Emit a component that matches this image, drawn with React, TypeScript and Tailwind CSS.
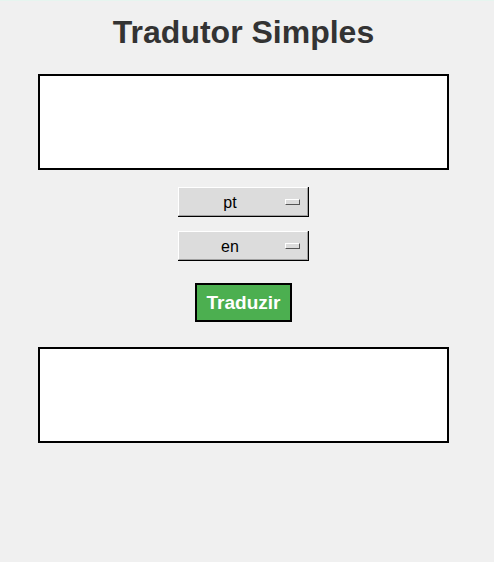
import React, { useState } from 'react';

const OptionMenu: React.FC<{ value: string }> = ({ value }) => (
    <div className="w-[131px] h-[30px] border-r border-b border-black">
        <div className="w-full h-full flex items-center bg-[#dcdcdc] border-t border-l border-white border-r border-b border-r-[#a0a0a0] border-b-[#a0a0a0]">
            <span className="flex-1 text-center text-[16px] leading-none text-black pr-[4px] pt-[2px]">{value}</span>
            {/* indicator */}
            <div className="w-[15px] h-[6px] mr-[7px] bg-[#dcdcdc] border-t border-l border-white border-r border-b border-r-[#555] border-b-[#555]" />
        </div>
    </div>
);

const App: React.FC = () => {
    const [src] = useState('pt');
    const [dest] = useState('en');

    return (
        <div className="w-[494px] h-[562px] bg-[#f0f0f0] border-t border-[#e6f5ef]" style={{ fontFamily: '"Liberation Sans", Arial, sans-serif' }}>
            <div className="w-[487px] flex flex-col items-center">
                <h1 className="mt-[15px] text-[32px] leading-[32px] font-bold text-[#333333]">Tradutor Simples</h1>

                <textarea className="mt-[26px] w-[411px] h-[96px] border-2 border-black bg-white resize-none outline-none" />

                <div className="mt-[17px]">
                    <OptionMenu value={src} />
                </div>
                <div className="mt-[14px]">
                    <OptionMenu value={dest} />
                </div>

                <button className="mt-[22px] w-[97px] h-[39px] bg-[#4caf50] border-2 border-black text-white font-bold text-[19px] leading-none">
                    Traduzir
                </button>

                <textarea className="mt-[25px] w-[411px] h-[96px] border-2 border-black bg-white resize-none outline-none" />
            </div>
        </div>
    );
};

export default App;
